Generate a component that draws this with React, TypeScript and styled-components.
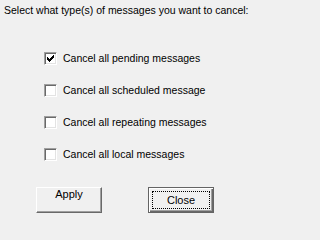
import React, { useState } from "react";
import styled, { createGlobalStyle } from "styled-components";

const GlobalStyle = createGlobalStyle`
  html, body {
    margin: 0;
    padding: 0;
    background: #f0f0f0;
  }
`;

const options = [
  "Cancel all pending messages",
  "Cancel all scheduled message",
  "Cancel all repeating messages",
  "Cancel all local messages",
];

export default function App() {
  const [checked, setChecked] = useState([true, false, false, false]);

  const toggle = (index: number) => {
    setChecked((prev) => prev.map((value, i) => (i === index ? !value : value)));
  };

  return (
    <Dialog>
      <GlobalStyle />
      <Prompt>Select what type(s) of messages you want to cancel:</Prompt>
      <OptionList>
        {options.map((label, i) => (
          <OptionRow key={label} onClick={() => toggle(i)}>
            <CheckBox>
              {checked[i] ? (
                <svg width="7" height="7" viewBox="0 0 7 7" shapeRendering="crispEdges">
                  <path
                    d="M6 0h1v3h-1v1h-1v1h-1v1h-1v1h-1v-1h-1v-1h-1v-3h1v1h1v1h1v-1h1v-1h1z"
                    fill="#000"
                  />
                </svg>
              ) : null}
            </CheckBox>
            <OptionLabel>{label}</OptionLabel>
          </OptionRow>
        ))}
      </OptionList>
      <ButtonRow>
        <PushButton>Apply</PushButton>
        <PushButton isDefault>
          <FocusRect>Close</FocusRect>
        </PushButton>
      </ButtonRow>
    </Dialog>
  );
}

const Dialog = styled.div`
  width: 253px;
  height: 216px;
  box-sizing: border-box;
  padding: 4px 0 0 4px;
  background: #f0f0f0;
  color: #000;
  font-family: "Liberation Sans", Arial, sans-serif;
  font-size: 10.5px;
  line-height: 13px;
  display: flex;
  flex-direction: column;
  overflow: hidden;
`;

const Prompt = styled.div`
  white-space: nowrap;
`;

const OptionList = styled.div`
  display: flex;
  flex-direction: column;
  gap: 19px;
  margin-top: 35px;
  padding-left: 40px;
`;

const OptionRow = styled.label`
  display: flex;
  align-items: center;
  gap: 6px;
  height: 13px;
  cursor: default;
`;

const CheckBox = styled.span`
  width: 13px;
  height: 13px;
  box-sizing: border-box;
  background: #fff;
  border-style: solid;
  border-width: 1px;
  border-color: #a0a0a0 #fff #fff #a0a0a0;
  box-shadow: inset 1px 1px 0 #696969, inset -1px -1px 0 #e3e3e3;
  display: flex;
  align-items: center;
  justify-content: center;
  flex-shrink: 0;
`;

const OptionLabel = styled.span`
  white-space: nowrap;
`;

const ButtonRow = styled.div`
  display: flex;
  gap: 46px;
  margin-top: 26px;
  padding-left: 32px;
`;

const PushButton = styled.button<{ isDefault?: boolean }>`
  width: 66px;
  height: 26px;
  box-sizing: border-box;
  margin: 0;
  padding: ${(props) => (props.isDefault ? "3px" : "0")};
  background: #f0f0f0;
  color: #000;
  font-family: "Liberation Sans", Arial, sans-serif;
  font-size: 11px;
  border-style: solid;
  border-width: 1px;
  border-color: ${(props) =>
    props.isDefault ? "#646464" : "#fff #696969 #696969 #fff"};
  box-shadow: ${(props) =>
    props.isDefault
      ? "inset 1px 1px 0 #fff, inset -1px -1px 0 #696969, inset -2px -2px 0 #a0a0a0"
      : "inset -1px -1px 0 #a0a0a0"};
  display: flex;
  align-items: stretch;
  justify-content: center;
`;

const FocusRect = styled.span`
  flex: 1;
  border: 1px dotted #000;
  display: flex;
  align-items: center;
  justify-content: center;
`;
